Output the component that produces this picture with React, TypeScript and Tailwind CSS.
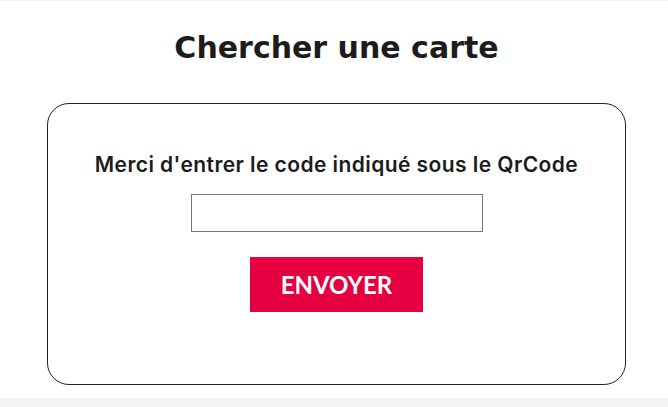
export default function App() {
  return (
    <div className="w-[668px] h-[407px] bg-[#f4f4f4] pt-px overflow-hidden">
      <div className="bg-white h-[397px] flex flex-col items-center pl-[5px]">
        <h1
          className="mt-[27px] h-[40px] leading-[40px] text-[30px] font-bold text-[#1c1c1c]"
          style={{ fontFamily: "'DejaVu Sans', sans-serif" }}
        >
          Chercher une carte
        </h1>
        <div className="mt-[35px] w-[579px] h-[282px] border border-[#222] rounded-[22px] flex flex-col items-center">
          <p
            className="mt-[48px] h-[26px] leading-[26px] text-[21px] font-semibold tracking-[0.43px] text-[#1c1c1c]"
            style={{ fontFamily: "Inter, 'Noto Sans', sans-serif" }}
          >
            Merci d'entrer le code indiqué sous le QrCode
          </p>
          <input
            type="text"
            className="mt-[16px] w-[292px] h-[38px] border border-[#767676] bg-white outline-none"
          />
          <button
            className="mt-[25px] w-[173px] h-[55px] pt-[1px] bg-[#e60042] text-white text-[24px] font-bold leading-[54px]"
            style={{ fontFamily: "Lato, 'Noto Sans', sans-serif" }}
          >
            ENVOYER
          </button>
        </div>
      </div>
    </div>
  );
}
